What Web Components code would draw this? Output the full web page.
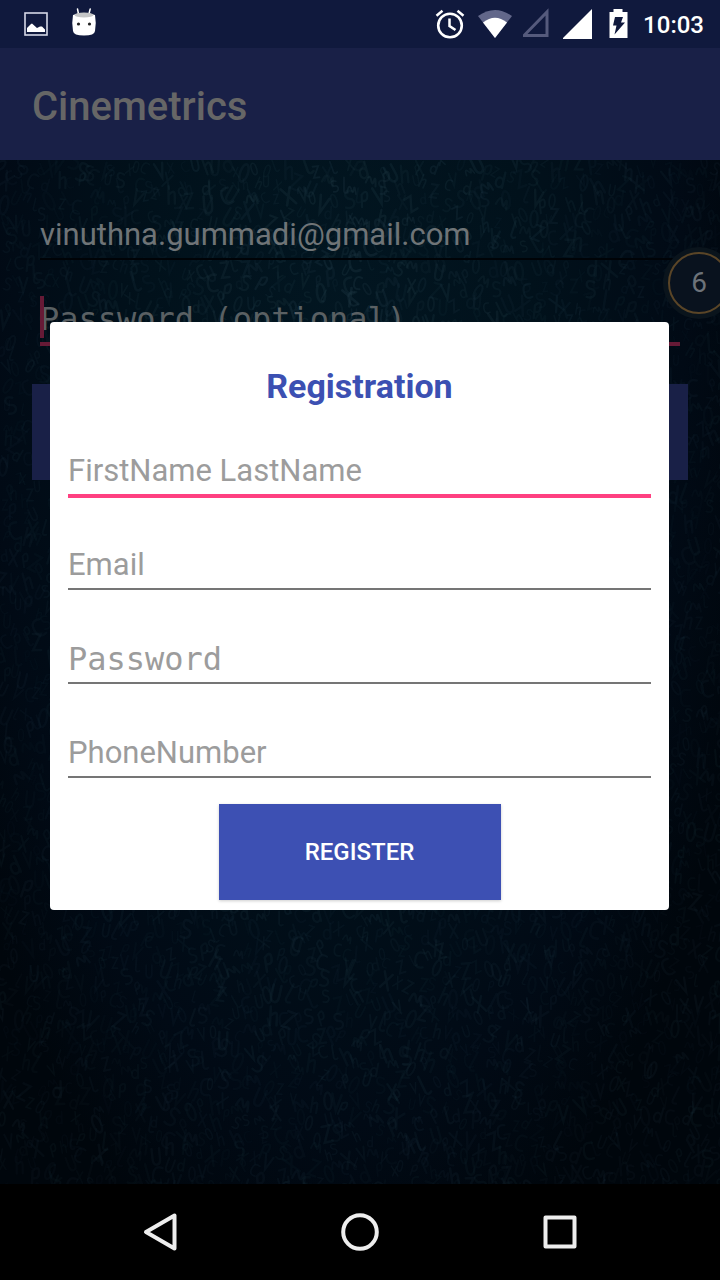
<!DOCTYPE html>
<html lang="en">
<head>
<meta charset="utf-8">
<meta name="viewport" content="width=device-width, initial-scale=1">
<title>Cinemetrics</title>
<style>
  html, body { margin: 0; height: 100%; background: #000; }
  body { font-family: Roboto, "Noto Sans", sans-serif; }
</style>
</head>
<body>
<cine-app></cine-app>

<template id="t-app">
  <style>
    :host { display: flex; flex-direction: column; min-height: 100vh; }
    .window { flex: 1; display: grid; grid-template-columns: 100%; grid-template-rows: auto 1fr; position: relative; overflow: hidden; }
  </style>
  <status-bar>10:03</status-bar>
  <div class="window">
    <app-bar>Cinemetrics</app-bar>
    <login-screen></login-screen>
    <chat-bubble>6</chat-bubble>
    <registration-dialog></registration-dialog>
  </div>
  <nav-bar></nav-bar>
</template>

<template id="t-status">
  <style>
    :host { display: flex; align-items: center; justify-content: space-between; height: 48px; padding: 0 16px 0 20px; box-sizing: border-box; background: #10193d; color: #fff; font-size: 24px; font-weight: 500; line-height: 32px; }
    .left, .right { display: flex; align-items: center; }
    .left { gap: 16px; }
    .right { gap: 10px; }
    svg { display: block; }
    .time { padding-top: 1px; }
  </style>
  <div class="left">
    <svg width="32" height="32" viewBox="0 0 32 32"><rect x="5" y="5" width="22" height="22" fill="none" stroke="#d5d7e6" stroke-width="1.6"/><path d="M7 24v-4l4-4 1-.5 5 4.500 3-1.500 2 0 3 3v2.500z" fill="#fff"/></svg>
    <svg width="32" height="32" viewBox="0 0 32 32"><path d="M10.600 6.500L9.500 1M20.800 6.500L22.200 1" stroke="#fff" stroke-width="1.500" stroke-linecap="round"/><path d="M5 7Q16 3 27 7Q28.500 15 27 23Q26.500 27.500 16 27.500Q5.500 27.500 5 23Q3.500 15 5 7z" fill="#fff"/><ellipse cx="16" cy="7" rx="9.500" ry="2.600" fill="#c4c5c6"/><circle cx="10.500" cy="16" r="1.600" fill="#222"/><circle cx="21.500" cy="16" r="1.600" fill="#222"/></svg>
  </div>
  <div class="right">
    <svg width="32" height="32" viewBox="0 0 32 32"><circle cx="15" cy="17.500" r="11.800" fill="none" stroke="#fff" stroke-width="2.600"/><path d="M14.500 10.500v7.500l6 4M1.500 7.800l6-5M28.500 7.800l-6-5" fill="none" stroke="#fff" stroke-width="2.500"/></svg>
    <svg width="36" height="32" viewBox="0 0 36 32"><path d="M1 8Q18-4 35 8L18 30z" fill="#62678a"/><path d="M6 14.500Q18 5 30 14.500L18 30z" fill="#fff"/></svg>
    <svg width="30" height="32" viewBox="0 0 30 32"><path d="M1 27.500H24V4z" fill="none" stroke="#555a7c" stroke-width="3"/></svg>
    <svg width="32" height="32" viewBox="0 0 32 32"><path d="M-1 31H29V1z" fill="#fff"/></svg>
    <svg width="28" height="32" viewBox="0 0 28 32"><path d="M8.500 1h9v3h5v26h-18V4h4z" fill="#fff"/><path d="M10 9h8l-2 5.500h4l-10.500 12 2-9H8z" fill="#10193d"/></svg>
    <span class="time"><slot></slot></span>
  </div>
</template>

<template id="t-appbar">
  <style>
    :host { display: flex; align-items: center; height: 112px; padding: 6px 32px 0; box-sizing: border-box; background: #192047; }
    h1 { margin: 0; font-size: 40px; line-height: 48px; font-weight: 500; color: #666; }
  </style>
  <h1><slot></slot></h1>
</template>

<template id="t-login">
  <style>
    :host { display: grid; grid-template-columns: 100%; overflow: hidden; background: radial-gradient(ellipse 60% 95% at 47% 18%, #021621 0%, #01111b 45%, #010a15 80%, #00060c 100%); }
    glyph-texture, form { grid-area: 1 / 1; }
    form { display: flex; flex-direction: column; gap: 34px; padding: 52px 32px 0; align-self: start; }
    line-field { margin: 0 8px; --ink: #6f7477; --hint: #5a6063; --line: #000307; --accent: #661a36; }
    button { margin: 4px 0 0; height: 96px; border: 0; background: #192047; }
  </style>
  <glyph-texture></glyph-texture>
  <form>
    <line-field label="Email" type="email" value="vinuthna.gummadi@gmail.com"></line-field>
    <line-field label="Password (optional)" type="password" active caret></line-field>
    <button type="button" aria-label="Sign in or register"></button>
  </form>
</template>

<template id="t-texture">
  <style>
    :host { display: block; min-height: 0; height: 100%; contain: size; }
    svg { display: block; width: 100%; height: 100%; }
  </style>
  <svg viewBox="0 0 720 1024" preserveAspectRatio="xMidYMid slice" aria-hidden="true" fill="none" stroke-width="2" stroke-linecap="round"></svg>
</template>

<template id="t-field">
  <style>
    :host { display: block; height: 50px; }
    label { display: block; position: relative; }
    input { display: block; width: 100%; height: 46px; box-sizing: border-box; margin: 0; padding: 0; border: 0; outline: 0; background: none; color: var(--ink); font: 400 31px/46px Roboto, "Noto Sans", sans-serif; }
    input[type=password] { font-family: "DejaVu Sans Mono", monospace; font-size: 32px; }
    input::placeholder { color: var(--hint); opacity: 1; }
    .line { height: 2px; background: var(--line); }
    :host([active]) .line { height: 4px; background: var(--accent); }
    .caret { display: none; position: absolute; left: 0; top: 0; width: 4px; height: 42px; background: var(--accent); }
    :host([caret]) .caret { display: block; }
  </style>
  <label><input><span class="caret"></span><div class="line"></div></label>
</template>

<template id="t-bubble">
  <style>
    :host { position: absolute; z-index: 1; top: 199px; right: -15px; width: 72px; height: 72px; border-radius: 50%; background: #0a141c; display: grid; place-items: center; }
    button { width: 62px; height: 62px; padding: 0; border: 2px solid #5a4527; border-radius: 50%; background: #09121e; color: #6d7279; font: 400 28px/32px Roboto, "Noto Sans", sans-serif; }
  </style>
  <button type="button"><slot></slot></button>
</template>

<template id="t-dialog">
  <style>
    :host { position: absolute; z-index: 2; inset: 0; display: flex; align-items: center; padding: 0 51px 0 50px; }
    dialog { position: static; flex: 1; box-sizing: border-box; margin: 0; padding: 42px 18px 10px; border: 0; border-radius: 4px; background: #fff; }
    h2 { margin: 0 0 40px; text-align: center; font-size: 34px; line-height: 44px; font-weight: 700; color: #3c50b2; }
    form { display: flex; flex-direction: column; gap: 44px; }
    line-field { --ink: #212121; --hint: #9c9c9c; --line: #757575; --accent: #ff4081; }
    button { align-self: center; margin-top: -20px; width: 282px; height: 96px; border: 0; background: #3d50b3; box-shadow: 0 1px 3px #0003; color: #fff; font: 500 24px/32px Roboto, "Noto Sans", sans-serif; }
  </style>
  <dialog open aria-labelledby="title">
    <h2 id="title">Registration</h2>
    <form>
      <line-field label="FirstName LastName" type="text" active></line-field>
      <line-field label="Email" type="email"></line-field>
      <line-field label="Password" type="password"></line-field>
      <line-field label="PhoneNumber" type="tel"></line-field>
      <button type="button">REGISTER</button>
    </form>
  </dialog>
</template>

<template id="t-nav">
  <style>
    :host { display: block; background: #000; }
    nav { display: flex; justify-content: center; height: 96px; }
    button { display: grid; place-items: center; width: 200px; padding: 0; border: 0; background: none; }
    svg { display: block; fill: none; stroke: #eee; stroke-width: 4; stroke-linejoin: round; }
  </style>
  <nav aria-label="System">
    <button type="button" aria-label="Back"><svg width="48" height="48" viewBox="0 0 48 48"><path d="M38.500 7.500v33L10 24z"/></svg></button>
    <button type="button" aria-label="Home"><svg width="48" height="48" viewBox="0 0 48 48"><circle cx="24" cy="24" r="16.800"/></svg></button>
    <button type="button" aria-label="Overview"><svg width="48" height="48" viewBox="0 0 48 48"><rect x="9.500" y="9.500" width="29" height="29"/></svg></button>
  </nav>
</template>

<script>
  class TemplateElement extends HTMLElement {
    constructor() {
      super();
      const root = this.attachShadow({ mode: "open" });
      root.append(document.getElementById(this.constructor.template).content.cloneNode(true));
    }
  }

  class LineField extends TemplateElement {
    static template = "t-field";
    connectedCallback() {
      const input = this.shadowRoot.querySelector("input");
      const label = this.getAttribute("label");
      input.type = this.getAttribute("type") || "text";
      input.placeholder = label;
      input.value = this.getAttribute("value") || "";
      input.spellcheck = false;
      input.setAttribute("aria-label", label);
    }
  }

  // Faint scribbles scattered on a jittered grid; seeded so they never move.
  class GlyphTexture extends TemplateElement {
    static template = "t-texture";
    connectedCallback() {
      let seed = 41;
      const rnd = () => (seed = (seed * 16807) % 2147483647) / 2147483647;
      const shapes = [
        "M-3 0a3 7 0 1 0 6 0a3 7 0 1 0-6 0",
        "M-3 2a3 4 0 1 0 6 0a3 4 0 1 0-6 0M3-7V6",
        "M3-6Q-4-8-4 0T3 6",
        "M3-5C-4-10-5-1 0 0S3 9-4 6",
        "M-3-6V2Q-3 7 0 7T3 2V-6",
        "M-3-7L0 6L4-6",
        "M-2-7V7M-2 0Q3-5 3 0V7",
        "M-3-6H3L-3 6H3",
        "M-4-7L3 7M3-6L-4 6",
        "M-1-8V5Q0 8 3 6",
        "M-5 4Q-4-6-1 0T2 0T5 5",
        "M-2 8V-3Q3-8 3-2T-2 2"
      ];
      let out = "";
      for (let y = 0; y < 1024; y += 17) {
        for (let x = 0; x < 720; x += 11) {
          const px = Math.round(x + rnd() * 10);
          const py = Math.round(y + rnd() * 14);
          const turn = Math.round(rnd() * 60 - 30);
          const size = (0.75 + rnd() * 0.6).toFixed(2);
          const glow = 1 - Math.min(0.6, Math.hypot((px - 340) / 600, (py - 100) / 1800));
          const alpha = ((0.15 + rnd() * 0.2) * glow).toFixed(2);
          const d = shapes[Math.floor(rnd() * shapes.length)];
          out += `<path d="${d}" transform="translate(${px} ${py}) rotate(${turn}) scale(${size})" stroke="#213b47" stroke-opacity="${alpha}"/>`;
        }
      }
      this.shadowRoot.querySelector("svg").innerHTML = out;
    }
  }

  customElements.define("line-field", LineField);
  customElements.define("glyph-texture", GlyphTexture);
  customElements.define("status-bar", class extends TemplateElement { static template = "t-status"; });
  customElements.define("app-bar", class extends TemplateElement { static template = "t-appbar"; });
  customElements.define("login-screen", class extends TemplateElement { static template = "t-login"; });
  customElements.define("chat-bubble", class extends TemplateElement { static template = "t-bubble"; });
  customElements.define("registration-dialog", class extends TemplateElement { static template = "t-dialog"; });
  customElements.define("nav-bar", class extends TemplateElement { static template = "t-nav"; });
  customElements.define("cine-app", class extends TemplateElement { static template = "t-app"; });
</script>
</body>
</html>
